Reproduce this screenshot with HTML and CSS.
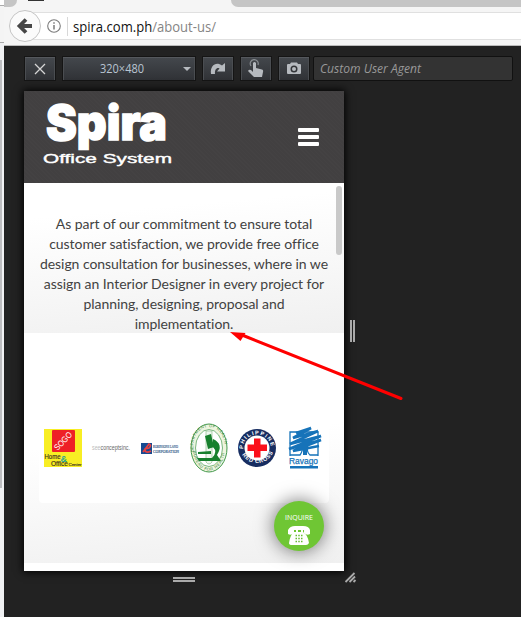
FILE: index.html
```html
<!DOCTYPE html>
<html lang="en">
<head>
<meta charset="utf-8">
<title>Spira Office System</title>
<link rel="stylesheet" href="styles.css">
</head>
<body>
<div class="edge"><i></i><b></b></div>
<div class="browser">
  <header class="chrome">
    <div class="tabs"><span class="tab-left"></span><span class="tab-icon"></span><span class="tab-right"></span></div>
    <div class="address">
      <svg class="back" width="32" height="32" viewBox="0 0 32 32"><circle cx="16" cy="16" r="15.5" fill="#fbfbfb" stroke="#c5c5c5"/><path d="M23 16H12M17 9.500L10.500 16L17 22.500" fill="none" stroke="#474747" stroke-width="3.8"/></svg>
      <svg class="info" width="14" height="14" viewBox="0 0 14 14"><circle cx="7" cy="7" r="6.3" fill="none" stroke="#7b7b7b" stroke-width="1.1"/><path d="M7 6v4.5M7 3.2v1.6" stroke="#7b7b7b" stroke-width="1.5"/></svg>
      <span class="divider"></span>
      <svg class="url" width="160" height="24"><text x="0" y="16" textLength="143" lengthAdjust="spacingAndGlyphs">spira.com.ph<tspan fill="#858585">/about-us/</tspan></text></svg>
    </div>
  </header>
  <main class="responsive">
    <div class="toolbar">
      <button class="tool close" aria-label="Close"><svg width="12" height="12"><path d="M1 1L11 11M11 1L1 11" stroke="#d5d5d5" stroke-width="1.3"/></svg></button>
      <button class="tool size"><svg width="132" height="23"><text x="37" y="16" textLength="44" lengthAdjust="spacingAndGlyphs">320×480</text><path d="M120 10h8l-4 4z" fill="#b6babf"/></svg></button>
      <button class="tool rotate" aria-label="Rotate"><svg width="16" height="14" viewBox="0 0 16 14"><path d="M1 12C0 5 4 1 9 2Q11 2.500 12 3.500L15 1V9.500H7L9.500 6.500C7 5 4.500 7.500 5 12z" fill="#b6babf"/></svg></button>
      <button class="tool touch" aria-label="Touch"><svg width="18" height="20" viewBox="0 0 18 20"><path d="M4 7A4 4 0 1 1 11 6" fill="none" stroke="#888d91" stroke-width="1.2"/><path d="M6 4Q7.5 2 9 4V9L15 10.5Q16.5 11 16 13L15 18H7L1 12Q2 10 4 11L6 13z" fill="#b6babf"/></svg></button>
      <button class="tool camera" aria-label="Screenshot"><svg width="14" height="13" viewBox="0 0 14 13"><path d="M0 3Q0 2 1 2H3L4 .5H10L11 2H13Q14 2 14 3V11Q14 12 13 12H1Q0 12 0 11z" fill="#b6babf"/><circle cx="7" cy="7" r="3.5" fill="#333539"/><circle cx="7" cy="7" r="2" fill="#b6babf"/></svg></button>
      <div class="agent"><svg width="150" height="23"><text x="6" y="16" textLength="101" lengthAdjust="spacingAndGlyphs">Custom User Agent</text></svg></div>
    </div>
    <div class="stage">
      <section class="phone">
        <header class="site-head">
          <svg class="logo" width="140" height="80" viewBox="0 0 140 80">
            <text class="spira" x="3" y="50" textLength="121" lengthAdjust="spacingAndGlyphs">Spira</text>
            <text class="office" x="0" y="73" textLength="129" lengthAdjust="spacingAndGlyphs">Office System</text>
          </svg>
          <div class="menu"><i></i><i></i><i></i></div>
        </header>
        <div class="intro">
          <p>As part of our commitment to ensure total<br>customer satisfaction, we provide free office<br>design consultation for businesses, where in we<br>assign an Interior Designer in every project for<br>planning, designing, proposal and<br>implementation.</p>
          <span class="scroll"></span>
        </div>
        <div class="blank"></div>
        <div class="clients">
          <div class="client-row">
            <svg width="38" height="38" viewBox="0 0 38 38"><path fill="#f8ee24" d="M0 0h38v38H0z"/><rect x="8" y="1" width="23" height="22" rx="1" fill="#ee2026"/><text transform="translate(13.500 22) rotate(-46)" font-size="8.500" fill="#fff" textLength="22" lengthAdjust="spacingAndGlyphs">SOGO</text><text x="16.500" y="33" font-size="9" fill="#27a598" font-weight="bold">&amp;</text><g fill="#3b3020" stroke="#3b3020" stroke-width=".15"><text x=".5" y="29.500" font-size="6.500" textLength="16" lengthAdjust="spacingAndGlyphs">Home</text><text x="7" y="36.500" font-size="6.500" textLength="17" lengthAdjust="spacingAndGlyphs">Office</text><text x="24.500" y="36.500" font-size="4.300" textLength="13" lengthAdjust="spacingAndGlyphs">Center</text></g></svg>
            <svg width="39" height="38"><text y="21" font-size="6.500" fill="#bbb" textLength="38" lengthAdjust="spacingAndGlyphs">see<tspan fill="#666">conceptsinc.</tspan></text></svg>
            <svg width="39" height="38" viewBox="0 0 39 38"><path fill="#174a91" d="M0 14h11v11H0z"/><path d="M2 23L8 15Q11 16 8 19L4 20Q4 25 10 22" fill="none" stroke="#e64243" stroke-width="1.700"/><g class="serif"><text x="12" y="18.800" textLength="25" lengthAdjust="spacingAndGlyphs">ROBINSONS LAND</text><text x="12" y="24" textLength="26" lengthAdjust="spacingAndGlyphs">CORPORATION</text></g></svg>
            <svg width="38" height="50" viewBox="0 0 38 50"><defs><path id="doh-top" d="M4 29C1 13 10 4 19 4S37 13 34 29"/><path id="doh-low" d="M3 28C6 54 32 54 35 28"/></defs><ellipse cx="19" cy="25" rx="18" ry="24" fill="#eef5df" stroke="#43994c"/><ellipse cx="19" cy="25" rx="13.500" ry="18.500" fill="#fff" stroke="#43994c" stroke-width=".7"/><g fill="#32843a" font-size="4"><text><textPath href="#doh-top" textLength="59">DEPARTMENT OF HEALTH</textPath></text><text><textPath href="#doh-low" textLength="53">BUREAU FOR HEALTH</textPath></text></g><path d="M16 8h6v31q-3 4-6 0z" fill="#eef7ed" stroke="#8fbd90" stroke-width=".7"/><path d="M15 13L21 11L24 24L18 26zM23 16Q34 21 27 32L31 38H9L7 35H22Q28 29 23 24zM8 29L21 28V31H8z" fill="#17802d"/></svg>
            <svg width="38" height="38" viewBox="0 0 38 38"><defs><path id="cross-top" d="M5.200 21A13.900 13.900 0 1 1 32.800 21"/><path id="cross-low" d="M2.500 22A17.300 17.300 0 0 0 35.500 22"/></defs><circle cx="19" cy="19" r="19" fill="#172d61"/><circle cx="19" cy="19" r="12.500" fill="#fff"/><path d="M16 9.500h6.500v6H29v6.500h-6.500v6.500H16V22H9.500v-6.500H16z" fill="#fb101b"/><g fill="#fff" font-weight="bold" font-size="5.500"><text><textPath href="#cross-top" startOffset="1" textLength="42">PHILIPPINE</textPath></text><text><textPath href="#cross-low" startOffset="4" textLength="38">RED CROSS</textPath></text></g></svg>
            <svg class="ravago" width="36" height="42" viewBox="0 0 36 42"><g fill="none" stroke="#1673b9"><path d="M2 29V5H30V29M1.500 28H12Q15 24 14 20L20 17Q18 25 22 28H30.500" stroke-width="1.300"/><path d="M8 6L23 1L5 11L30 4L2 17L33 9L1 22L33 13L5 24L31 19" stroke-width="2.700" stroke-linejoin="bevel"/><path d="M17 17V28" stroke-width="4"/></g><text x="1" y="36.500" font-size="9" fill="#1673b9" stroke="#1673b9" stroke-width=".25" textLength="29" lengthAdjust="spacingAndGlyphs">Ravago</text><path fill="#1673b9" d="M2 39h28v2.500H2z"/></svg>
          </div>
          <div class="inquire"><svg width="50" height="50" viewBox="0 0 50 50"><text x="11" y="18.500" textLength="28" lengthAdjust="spacingAndGlyphs">INQUIRE</text><path d="M14 33V29Q16 25 21 25H29Q35 25 36 29V33Q33 35 30 32V29H20V32Q17 35 14 33z" fill="#fff"/><path d="M20 31H22V29H24V31H27V29H29V31Q34 34 35 42Q34 44 32 44H18Q15 44 15 42Q16 34 20 31z" fill="#fff"/><path d="M21.500 34.500h7M21.500 37.500h7M21.500 40.500h7" stroke="#69bb35" stroke-width="1.300" stroke-dasharray="1.500 1.250"/></svg></div>
        </div>
        <div class="bottom"></div>
      </section>
      <div class="grip-v"></div>
      <div class="grip-h"></div>
      <svg class="corner" width="11" height="11" viewBox="0 0 11 11"><path d="M.5 10L9.500 1M4.500 10L10 4.500M8.500 10L10.500 8" stroke="#aaa" stroke-width="1.800"/></svg>
    </div>
  </main>
</div>
<svg class="annotation" width="190" height="90" viewBox="0 0 190 90"><path d="M22 14L181 77.500" stroke="#f00" stroke-width="3" stroke-linecap="round"/><path d="M10 11L25.500 12L20.500 20z" fill="#f00"/></svg>
</body>
</html>
```

FILE: styles.css
```css
* { box-sizing: border-box; }
body { margin: 0; width: 521px; height: 617px; display: flex; overflow: hidden; position: relative; background: #222; font-family: "Liberation Sans", sans-serif; }
svg { display: block; flex: none; overflow: visible; }
.edge { width: 4px; height: 617px; background: #f0f1f3; flex: none; }
.edge i { display: block; height: 43px; border-top: 5px solid #fff; border-bottom: 1px solid #aaa; background: linear-gradient(#aaa 1px, #f4f4f4 1px); }
.edge b { display: block; width: 2px; height: 428px; margin-top: 17px; background: #bcbdc0; }
.browser { width: 517px; }
.chrome { height: 46px; background: #f5f5f5; border-bottom: 1px solid #bbb; }
.tabs { height: 12px; display: flex; align-items: flex-start; }
.tab-left { width: 13px; height: 7px; background: #c5c5c5; border-radius: 0 0 10px 0; }
.tab-icon { width: 16px; height: 1px; background: #333; margin-left: 11px; }
.tab-right { height: 7px; flex: 1; margin-left: 187px; background: #c5c5c5; border-radius: 0 0 0 10px; }
.address { height: 28px; margin-left: 20px; background: #fff; border: solid #e0e0e0; border-width: 1px 0; display: flex; align-items: center; }
.back { margin-left: -15px; }
.info { margin-left: 6px; }
.divider { width: 1px; height: 19px; background: #d8d8d8; margin-left: 6px; }
.url { margin-left: 5px; margin-top: 3px; font: 14px "Open Sans", sans-serif; fill: #111; }
.responsive { height: 571px; background: #222; padding: 10px 0 0 20px; }
.toolbar { height: 25px; display: flex; }
.tool { padding: 0; height: 25px; border: 1px solid #151515; background: linear-gradient(#44484d, #303236); box-shadow: inset 0 1px #55585d, inset 1px 0 #4a4d51, inset -1px 0 #4a4d51; display: flex; align-items: center; justify-content: center; flex: none; }
.close { width: 32px; }
.size { width: 134px; margin-left: 6px; }
.rotate, .touch, .camera { width: 32px; margin-left: 6px; }
.size text { font: 12px "Open Sans", sans-serif; fill: #b9c5d2; }
.agent { width: 200px; height: 25px; margin-left: 3px; background: #333; border: 1px solid #111; border-radius: 2px; }
.agent text { font: italic 12px "Open Sans", sans-serif; fill: #999; }
.stage { margin-top: 10px; width: 332px; display: grid; grid-template-columns: 320px 12px; grid-template-rows: 480px 12px; }
.phone { width: 320px; height: 480px; background: #fff; box-shadow: 0 0 8px 1px #000; overflow: hidden; }
.site-head { height: 92px; padding: 0 25px 0 19px; display: flex; align-items: center; justify-content: space-between; background-color: #434142; background-image: repeating-linear-gradient(45deg, #444243 0 1px, #424041 1px 3px); }
.spira { font: 900 48px Inter, sans-serif; fill: #fff; stroke: #fff; stroke-width: 1.5px; }
.office { font: 13.5px "Liberation Sans", sans-serif; fill: #fff; stroke: #fff; stroke-width: .4px; }
.logo { margin-top: -14px; }
.menu { width: 21px; display: grid; gap: 3px; margin-top: -1px; }
.menu i { height: 4px; border-radius: 1px; background: #fff; }
.intro { height: 150px; position: relative; padding-top: 31px; background: linear-gradient(175deg, #fff 20%, #f0f0f0 100%); }
.intro p { margin: 0; font: 14px/20px Lato, sans-serif; font-variant-ligatures: none; letter-spacing: -.05px; color: #424242; text-align: center; white-space: nowrap; }
.scroll { position: absolute; top: 3px; right: 2px; width: 6px; height: 69px; border-radius: 3px; background: #c9c9c9; }
.blank { height: 70px; background: #fff; }
.clients { height: 160px; padding-left: 15px; position: relative; background: linear-gradient(175deg, #fff 25%, #f0f0f0 100%); }
.client-row { height: 100px; width: 290px; background: #fff; border-radius: 0 0 4px 4px; display: flex; align-items: center; gap: 10px; padding: 0 5px 10px; }
.client-row text { font-family: "Liberation Sans", sans-serif; }
.client-row .serif text { font: 4.7px "Liberation Serif", serif; fill: #315888; stroke: #315888; stroke-width: .15px; }
.ravago { margin-left: 2px; }
.inquire { position: absolute; left: 250px; top: 98px; width: 50px; height: 50px; border-radius: 50%; background: #6fc634; box-shadow: 0 0 18px 1px rgba(0,0,0,.5); }
.inquire text { font: 8px "Open Sans", sans-serif; fill: #fff; }
.bottom { height: 8px; background: #fff; }
.grip-v { width: 5px; height: 22px; margin: 229px 0 0 6px; border: solid #aaa; border-width: 0 2px; }
.grip-h { width: 22px; height: 5px; margin: 6px 0 0 149px; border: solid #aaa; border-width: 2px 0; }
.corner { margin-top: 1px; margin-left: 1px; }
.annotation { position: absolute; left: 220px; top: 321px; }
```
